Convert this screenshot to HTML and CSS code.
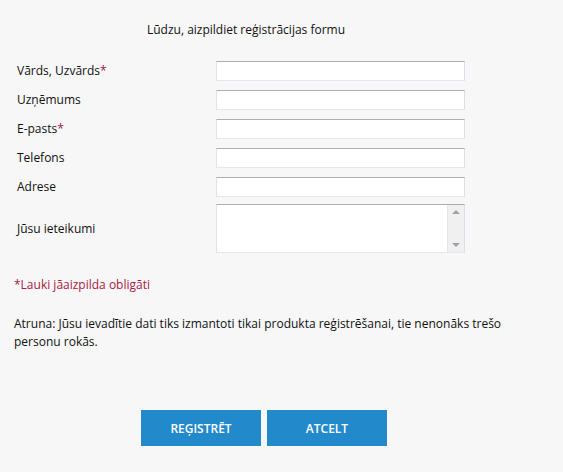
FILE: index.html
```html
<!DOCTYPE html>
<html lang="lv">
<head>
    <meta charset="UTF-8">
    <meta name="viewport" content="width=device-width, initial-scale=1.0">
    <title>Reģistrācija</title>
    <link rel="stylesheet" href="styles.css">
</head>
<body>

    <div class="page">
        <h1 class="title">Lūdzu, aizpildiet reģistrācijas formu</h1>

        <form id="regForm" class="reg-form">
            <div class="form-row">
                <label for="name">Vārds, Uzvārds<span class="req">*</span></label>
                <input type="text" id="name" name="name">
            </div>
            <div class="form-row">
                <label for="company">Uzņēmums</label>
                <input type="text" id="company" name="company">
            </div>
            <div class="form-row">
                <label for="email">E-pasts<span class="req">*</span></label>
                <input type="text" id="email" name="email">
            </div>
            <div class="form-row">
                <label for="phone">Telefons</label>
                <input type="text" id="phone" name="phone">
            </div>
            <div class="form-row">
                <label for="address">Adrese</label>
                <input type="text" id="address" name="address">
            </div>
            <div class="form-row tall">
                <label for="notes">Jūsu ieteikumi</label>
                <div class="textbox">
                    <textarea id="notes" name="notes"></textarea>
                    <div class="scroll">
                        <span class="arrow up"></span>
                        <span class="arrow down"></span>
                    </div>
                </div>
            </div>
        </form>

        <p class="required-note">*Lauki jāaizpilda obligāti</p>

        <p class="disclaimer">Atruna: Jūsu ievadītie dati tiks izmantoti tikai produkta reģistrēšanai, tie nenonāks trešo personu rokās.</p>

        <div class="buttons">
            <button type="button" class="btn">REĢISTRĒT</button>
            <button type="button" class="btn">ATCELT</button>
        </div>
    </div>

</body>
</html>
```

FILE: styles.css
```css
body {
    margin: 0;
    background-color: #f7f7f7;
    font-family: "Open Sans", "Noto Sans", sans-serif;
    font-size: 12px;
    color: #111;
}
.page {
    padding: 21px 14px 0 14px;
    width: 500px;
}
.title {
    font-size: 12px;
    font-weight: normal;
    line-height: 18px;
    margin: 0 0 22px 0;
    text-align: center;
    width: 464px;
}
.reg-form {
    margin: 0;
}
.form-row {
    display: flex;
    align-items: center;
    height: 20px;
    margin-bottom: 9px;
}
.form-row.tall {
    height: 49px;
    margin-top: -2px;
}
.form-row label {
    width: 199px;
    padding-left: 3px;
    line-height: 18px;
}
.req {
    color: #a3163f;
}
input[type="text"] {
    width: 249px;
    height: 20px;
    padding: 0 4px;
    margin: 0;
    box-sizing: border-box;
    background: #fff;
    border: 1px solid;
    border-color: #abadb3 #dbdfe6 #e3e9ef #e2e3ea;
    font: inherit;
}
.textbox {
    display: flex;
    width: 249px;
    height: 49px;
    box-sizing: border-box;
    background: #fff;
    border: 1px solid;
    border-color: #abadb3 #dbdfe6 #e3e9ef #e2e3ea;
}
.textbox textarea {
    flex: 1;
    border: none;
    resize: none;
    outline: none;
    font: inherit;
    padding: 2px 4px;
    background: transparent;
}
.scroll {
    width: 16px;
    background-color: #f0f0f0;
    border-left: 1px solid #e6e6e6;
    display: flex;
    flex-direction: column;
    justify-content: space-between;
    align-items: center;
    padding: 5px 0;
}
.arrow {
    width: 0;
    height: 0;
    border-left: 4px solid transparent;
    border-right: 4px solid transparent;
}
.arrow.up {
    border-bottom: 4px solid #a3a3a3;
}
.arrow.down {
    border-top: 4px solid #a3a3a3;
}
.required-note {
    color: #a81a45;
    line-height: 18px;
    margin: 23px 0 0 0;
}
.disclaimer {
    line-height: 18px;
    margin: 21px 0 0 0;
}
.buttons {
    display: flex;
    gap: 6px;
    margin: 59px 0 0 127px;
}
.btn {
    width: 120px;
    height: 36px;
    border: none;
    background-color: #228acb;
    color: #fff;
    font-family: "Open Sans", "Noto Sans", sans-serif;
    font-size: 12px;
    font-weight: 600;
    cursor: pointer;
}
.btn:hover {
    background-color: #1b78b3;
}
```
